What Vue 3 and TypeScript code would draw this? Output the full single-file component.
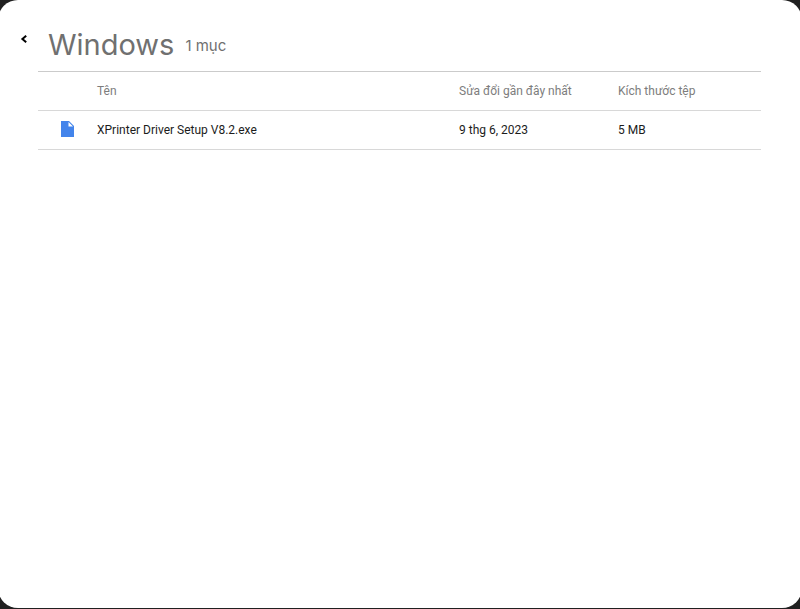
<script setup lang="ts">
interface FileEntry {
  name: string
  modified: string
  size: string
}

const folder = 'Windows'
const files: FileEntry[] = [
  { name: 'XPrinter Driver Setup V8.2.exe', modified: '9 thg 6, 2023', size: '5 MB' },
]
</script>

<template>
  <div class="backdrop">
    <main class="sheet">
      <button class="back" type="button" aria-label="Quay lại">
        <svg width="8" height="10" viewBox="0 0 8 10" aria-hidden="true">
          <path d="M6.2 1.8 2.4 5l3.8 3.2" fill="none" stroke="#000" stroke-width="2" />
        </svg>
      </button>
      <section class="content">
        <header class="heading">
          <h1>{{ folder }}</h1>
          <span class="count">{{ files.length }} mục</span>
        </header>
        <table>
          <colgroup>
            <col class="col-icon" />
            <col class="col-name" />
            <col class="col-date" />
            <col class="col-size" />
          </colgroup>
          <thead>
            <tr>
              <th></th>
              <th scope="col">Tên</th>
              <th scope="col">Sửa đổi gần đây nhất</th>
              <th scope="col">Kích thước tệp</th>
            </tr>
          </thead>
          <tbody>
            <tr v-for="file in files" :key="file.name">
              <td class="icon">
                <svg width="13" height="16" viewBox="0 0 13 16" aria-hidden="true">
                  <path d="M0 0h8l5 5v11H0z" fill="#4384eb" />
                  <path d="M7.5 1l4.5 4.5H7.5z" fill="#fff" />
                </svg>
              </td>
              <td>{{ file.name }}</td>
              <td>{{ file.modified }}</td>
              <td>{{ file.size }}</td>
            </tr>
          </tbody>
        </table>
      </section>
    </main>
  </div>
</template>

<style>
body {
  background: #202020;
}
</style>

<style scoped>
.backdrop {
  box-sizing: border-box;
  min-height: 100vh;
  padding-bottom: 1px;
  display: flex;
  overflow: hidden;
  background: #202020;
  font-family: Inter, "Noto Sans", sans-serif;
}

.sheet {
  flex: 1;
  display: flex;
  align-items: flex-start;
  box-sizing: border-box;
  margin: 0 -2px;
  padding: 24px 41px 24px 14px;
  border-radius: 20px;
  background: #fff;
}

.back {
  display: flex;
  align-items: center;
  justify-content: center;
  width: 24px;
  height: 30px;
  margin-right: 2px;
  padding: 0;
  border: 0;
  background: none;
  cursor: pointer;
}

.content {
  flex: 1;
}

.heading {
  display: flex;
  align-items: center;
  gap: 11px;
  height: 47px;
  box-sizing: border-box;
  padding: 0 0 5px 10px;
  color: #707070;
}

h1 {
  margin: 0;
  font-size: 29px;
  font-weight: 400;
  line-height: 40px;
}

.count {
  font-size: 15px;
  font-weight: 400;
}

table {
  width: 100%;
  table-layout: fixed;
  border-collapse: separate;
  border-spacing: 0;
  border-top: 1px solid #cbcbcb;
  font-family: Roboto, "Noto Sans", sans-serif;
  font-size: 12px;
  line-height: 18px;
}

.col-icon {
  width: 59px;
}

.col-date {
  width: 159px;
}

.col-size {
  width: 143px;
}

th,
td {
  box-sizing: border-box;
  height: 39px;
  padding: 0;
  border-bottom: 1px solid #d8d8d8;
  text-align: left;
  vertical-align: middle;
  white-space: nowrap;
}

th {
  color: #7d7d7d;
  font-weight: 400;
}

td {
  color: #1c1c1c;
}

.icon {
  padding-bottom: 2px;
}

.icon svg {
  display: block;
  margin: 0 auto;
}
</style>
